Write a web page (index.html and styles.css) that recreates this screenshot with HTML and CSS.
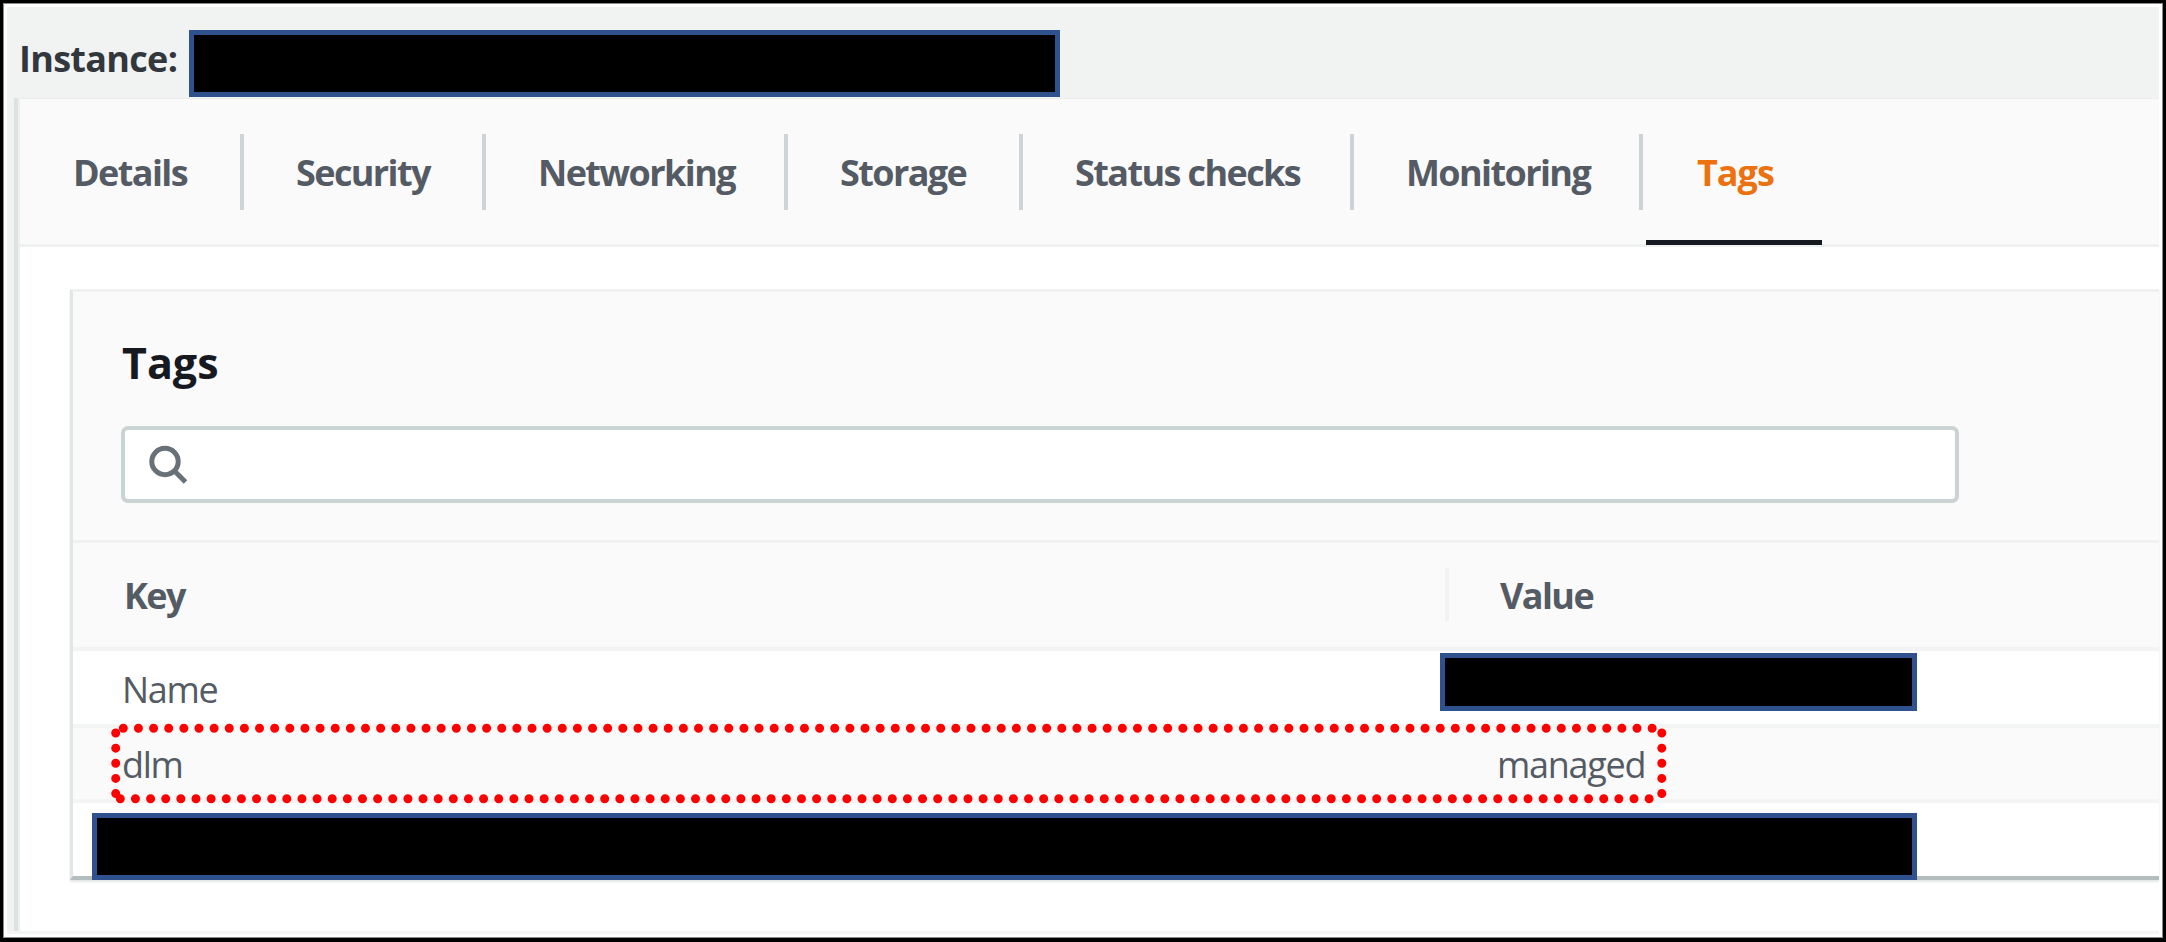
FILE: index.html
```
<!DOCTYPE html>
<html lang="en">
  <head>
    <meta charset="UTF-8" />
    <meta name="viewport" content="width=device-width, initial-scale=1.0" />
    <title>Instance tags</title>
    <link rel="stylesheet" href="styles.css">
  </head>
  <body>
    <div class="page">
      <header class="instance-header">
        <h1>Instance:</h1>
        <div class="redacted instance-id"></div>
      </header>

      <main class="details">
        <nav class="tabs">
          <a class="tab">Details</a>
          <a class="tab">Security</a>
          <a class="tab">Networking</a>
          <a class="tab">Storage</a>
          <a class="tab">Status checks</a>
          <a class="tab">Monitoring</a>
          <a class="tab active">Tags</a>
        </nav>

        <section class="panel">
          <div class="panel-header">
            <h2>Tags</h2>
            <div class="search">
              <svg width="40" height="40" viewBox="0 0 40 40" fill="none" stroke="#687078" stroke-width="5">
                <circle cx="16" cy="16.5" r="13.2" />
                <path d="M25 25.5 L36.5 37" />
              </svg>
            </div>
          </div>

          <div class="row row-head">
            <div class="key">Key</div>
            <div class="value">Value</div>
          </div>
          <div class="row row-name">
            <div class="key">Name</div>
            <div class="redacted name-value"></div>
          </div>
          <div class="row row-dlm">
            <div class="key">dlm</div>
            <div class="value">managed</div>
            <svg class="highlight" width="1560" height="84" viewBox="0 0 1560 84">
              <path d="M14.3 7.3 H1544" />
              <path d="M1552.8 12 V74" />
              <path d="M11.3 77.7 H1541" />
              <path d="M6.7 12 V74" />
            </svg>
          </div>
          <div class="row row-last">
            <div class="redacted"></div>
          </div>
        </section>
      </main>
    </div>
  </body>
</html>
```

FILE: styles.css
```
* {
  box-sizing: border-box;
}

body {
  margin: 0;
  font-family: "Open Sans", "Noto Sans", sans-serif;
  font-size: 36px;
  line-height: 48px;
  letter-spacing: -1.3px;
  color: #545b64;
}

h1,
h2 {
  margin: 0;
}

.page {
  height: 942px;
  padding: 4px 4px 3px 4px;
  border: 3px solid #000;
  border-bottom-width: 4px;
  box-shadow: inset 0 0 0 1px #8a8a8a;
  background: #fff;
  overflow: hidden;
}

.instance-header {
  display: flex;
  height: 91px;
  padding: 23px 0 0 12px;
  background: #f1f3f3;
}

.instance-header h1 {
  width: 170px;
  padding-top: 5px;
  font-size: 36px;
  font-weight: 700;
  letter-spacing: -0.7px;
  color: #32373e;
  white-space: nowrap;
}

.redacted {
  background: #000;
  border: 5px solid #2f528f;
}

.instance-id {
  width: 871px;
  height: 67px;
}

.details {
  height: 836px;
  padding-left: 7px;
  background: linear-gradient(to right, #f1f3f3 7px, #dfe2e3 7px, #dfe2e3 11px, #eef0f0 11px, #eef0f0 13px, #fff 13px);
  border-bottom: 3px solid #f3f5f4;
}

.tabs {
  display: grid;
  grid-template-columns: 224px 242px 302px 235px 331px 289px 180px;
  height: 149px;
  margin-left: 6px;
  background: #fafafa;
  border-top: 1px solid #eceeee;
  border-bottom: 3px solid #eff0f0;
}

.tab {
  position: relative;
  height: 76px;
  margin-top: 35px;
  padding: 15px 0 0 52px;
  border-right: 4px solid #ccd5d5;
  font-weight: 700;
  letter-spacing: -1.6px;
  white-space: nowrap;
}

.tab:first-child {
  padding-left: 53px;
}

.tab.active {
  padding-left: 54px;
  border: 0;
  letter-spacing: -1px;
  color: #ec7211;
}

.tab.active::after {
  content: "";
  position: absolute;
  left: 3px;
  top: 106px;
  width: 176px;
  height: 5px;
  background: #16191f;
}

.panel {
  height: 591px;
  margin: 42px 0 0 56px;
  background: #fff;
  border-top: 3px solid #eef1f0;
  border-left: 3px solid #e2e6e7;
  border-bottom: 4px solid #b3bdbe;
  box-shadow: 0 2px 2px #e3e7e7;
}

.panel-header {
  height: 251px;
  padding: 42px 0 0 49px;
  background: #fafafa;
  border-bottom: 3px solid #eff2f1;
}

.panel-header h2 {
  height: 92px;
  font-size: 43px;
  line-height: 58px;
  letter-spacing: 0;
  color: #16191f;
}

.search {
  width: 1838px;
  height: 77px;
  margin-left: -1px;
  padding: 15px 0 0 24px;
  background: #fff;
  border: 4px solid #cad3d3;
  border-radius: 7px;
}

.search svg {
  display: block;
}

.row {
  position: relative;
  display: grid;
  grid-template-columns: 1371px 1fr;
  padding-left: 49px;
}

.row-head {
  grid-template-columns: 1321px 1fr;
  height: 108px;
  padding: 25px 0 0 51px;
  background: #fafafa;
  border-bottom: 4px solid #f2f4f4;
  font-weight: 700;
  letter-spacing: -1.6px;
}

.row-head .key {
  padding-top: 4px;
}

.row-head .value {
  height: 53px;
  padding: 4px 0 0 51px;
  border-left: 4px solid #f1f3f3;
}

.row-name {
  grid-template-columns: 1318px 477px;
  height: 77px;
  border-bottom: 4px solid #f3f5f4;
}

.row-name .key {
  padding-top: 15px;
}

.name-value {
  height: 58px;
  margin-top: 2px;
}

.row-dlm {
  height: 75px;
  padding-top: 13px;
  background: #fafafa;
  border-bottom: 4px solid #f3f5f4;
}

.row-dlm .value {
  padding-left: 4px;
}

.highlight {
  position: absolute;
  left: 36px;
  top: -7px;
  fill: none;
  stroke: #f00;
  stroke-width: 9;
  stroke-linecap: round;
  stroke-dasharray: 0 15.137;
}

.row-last {
  grid-template-columns: 1825px;
  padding: 10px 0 0 19px;
}

.row-last .redacted {
  height: 67px;
}
```
